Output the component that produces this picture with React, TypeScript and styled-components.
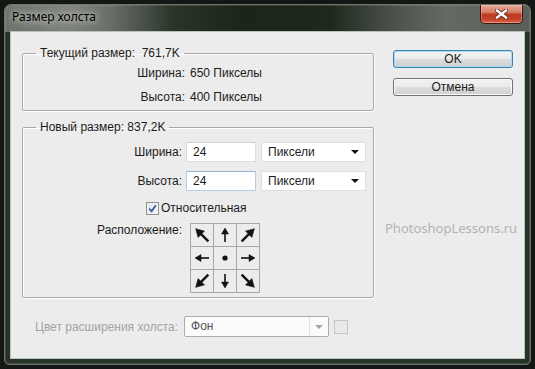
import styled, { createGlobalStyle } from "styled-components";

const GlobalStyle = createGlobalStyle`
  html, body {
    margin: 0;
    padding: 0;
    background: #151915;
  }
  body {
    width: 535px;
    height: 369px;
    overflow: hidden;
    font-family: "Liberation Sans", Arial, sans-serif;
    font-size: 12px;
    color: #1b1b1b;
  }
`;

const Desktop = styled.div`
  width: 535px;
  height: 369px;
  box-sizing: border-box;
  padding: 4px 4px 0 4px;
  background: #141814;
`;

const Window = styled.div`
  width: 527px;
  height: 361px;
  box-sizing: border-box;
  border: 1px solid #6d746c;
  border-radius: 7px 7px 5px 5px;
  padding: 0 5px 5px 5px;
  display: flex;
  flex-direction: column;
  background:
    linear-gradient(
        90deg,
        #6c716b 0%,
        #7e827d 12%,
        #6a6f69 20%,
        #2a3529 32%,
        #1b2619 45%,
        #1e291d 62%,
        #4c524b 74%,
        #656964 84%,
        #5b5f5a 100%
      )
      top / 100% 27px no-repeat,
    #283327;
  box-shadow: inset 0 0 0 1px rgba(255, 255, 255, 0.12);
`;

const TitleBar = styled.div`
  height: 26px;
  display: flex;
  justify-content: space-between;
  align-items: flex-start;
`;

const Title = styled.div`
  margin-left: 2px;
  line-height: 24px;
  font-family: "Noto Sans", "Open Sans", sans-serif;
  font-size: 12px;
  color: #000;
  text-shadow: 0 0 6px rgba(230, 232, 228, 0.9), 0 0 10px rgba(220, 222, 218, 0.7);
`;

const CloseButton = styled.div`
  width: 43px;
  height: 19px;
  margin-right: 2px;
  box-sizing: border-box;
  border: 1px solid #3a1912;
  border-top: none;
  border-radius: 0 0 5px 5px;
  display: flex;
  align-items: center;
  justify-content: center;
  background: linear-gradient(
    #e9ab9a 0%,
    #d67d66 40%,
    #c03a20 52%,
    #c4442a 80%,
    #dc6d4f 100%
  );
  box-shadow: inset 0 0 0 1px rgba(255, 220, 210, 0.35);
`;

const Client = styled.div`
  position: relative;
  flex: 1;
  box-sizing: border-box;
  border: 1px solid #b9c2b8;
  background: #ececec;
  padding: 0 11px 0 11px;
  display: grid;
  grid-template-columns: 352px 120px;
  column-gap: 19px;
  align-items: start;
`;

const LeftColumn = styled.div`
  display: flex;
  flex-direction: column;
  padding-top: 14px;
`;

const Group = styled.fieldset<{ $gap?: number }>`
  margin: 0;
  padding: 0;
  min-width: 0;
  border: 1px solid #a9a9a9;
  border-radius: 2px;
  box-shadow: inset 1px 1px 0 #fff, 1px 1px 0 #fff;
  & + & {
    margin-top: ${(p) => p.$gap ?? 9}px;
  }
`;

const Legend = styled.legend`
  margin-left: 13px;
  padding: 0 4px;
  line-height: 14px;
  font-size: 12px;
`;

const GroupBody = styled.div<{ $top: number; $bottom: number }>`
  display: flex;
  flex-direction: column;
  padding: ${(p) => p.$top}px 0 ${(p) => p.$bottom}px 0;
`;

const Row = styled.div<{ $label: number; $height?: number; $gap?: number }>`
  display: grid;
  grid-template-columns: ${(p) => p.$label}px auto auto;
  justify-content: start;
  align-items: center;
  column-gap: ${(p) => p.$gap ?? 4}px;
  height: ${(p) => p.$height ?? 24}px;
  & + & {
    margin-top: 0;
  }
`;

const InputRow = styled(Row)`
  & + & {
    margin-top: 9px;
  }
`;

const Label = styled.span`
  text-align: right;
  white-space: nowrap;
`;

const TextBox = styled.div<{ $focused?: boolean }>`
  width: 70px;
  height: 20px;
  box-sizing: border-box;
  background: #fff;
  border: 1px solid ${(p) => (p.$focused ? "#b6cde4" : "#dcdcdc")};
  border-top-color: ${(p) => (p.$focused ? "#8fb2d6" : "#d2d2d2")};
  padding-left: 6px;
  line-height: 18px;
`;

const Select = styled.div`
  width: 105px;
  height: 20px;
  margin-left: 1px;
  box-sizing: border-box;
  background: #fff;
  border: 1px solid #dedede;
  display: flex;
  align-items: center;
  justify-content: space-between;
  padding: 0 6px 0 6px;
`;

const Caret = styled.span<{ $color?: string }>`
  width: 0;
  height: 0;
  border-left: 4px solid transparent;
  border-right: 4px solid transparent;
  border-top: 4px solid ${(p) => p.$color ?? "#111"};
`;

const CheckRow = styled.label`
  display: flex;
  align-items: center;
  gap: 2px;
  height: 14px;
  margin-top: 10px;
  padding-left: 123px;
`;

const CheckBox = styled.span`
  width: 13px;
  height: 13px;
  box-sizing: border-box;
  border: 1px solid #8f8f8f;
  background: linear-gradient(135deg, #dfe3e9, #f6f7f9);
  box-shadow: inset 0 0 0 1px #f4f4f4;
  display: flex;
  align-items: center;
  justify-content: center;
`;

const AnchorRow = styled.div`
  display: grid;
  grid-template-columns: 159px 70px;
  column-gap: 8px;
  align-items: start;
  margin-top: 8px;
`;

const AnchorLabel = styled(Label)`
  margin-top: 0px;
  line-height: 14px;
`;

const AnchorGrid = styled.div`
  display: grid;
  grid-template-columns: repeat(3, 22px);
  grid-template-rows: repeat(3, 22px);
  gap: 1px;
  padding: 1px;
  width: 70px;
  box-sizing: border-box;
  background: #a8a8a8;
`;

const AnchorCell = styled.div`
  background: #ececec;
  display: flex;
  align-items: center;
  justify-content: center;
`;

const BottomRow = styled.div`
  display: flex;
  align-items: center;
  margin-top: 18px;
  padding-left: 13px;
  height: 21px;
  color: #a3a3a3;
`;

const DisabledSelect = styled.div`
  width: 145px;
  height: 21px;
  margin-left: 6px;
  box-sizing: border-box;
  border: 1px solid #acacac;
  border-radius: 2px;
  background: #fbfbfb;
  display: flex;
  color: #555;
`;

const DisabledValue = styled.span`
  flex: 1;
  padding-left: 6px;
  line-height: 19px;
  border-right: 1px solid #e2e2e2;
`;

const DisabledArrow = styled.span`
  width: 18px;
  display: flex;
  align-items: center;
  justify-content: center;
`;

const Swatch = styled.span`
  width: 14px;
  height: 14px;
  margin-left: 5px;
  box-sizing: border-box;
  border: 1px solid #c6c6c6;
  background: #e9e9e9;
`;

const ButtonColumn = styled.div`
  display: flex;
  flex-direction: column;
  gap: 10px;
  padding-top: 18px;
`;

const Button = styled.div<{ $default?: boolean }>`
  height: 18px;
  box-sizing: border-box;
  border: 1px solid ${(p) => (p.$default ? "#3b80ae" : "#707070")};
  border-radius: 3px;
  text-align: center;
  line-height: 16px;
  background: linear-gradient(#f2f2f2 0%, #ebebeb 48%, #dddddd 52%, #cfcfcf 100%);
  box-shadow: inset 0 0 0 1px ${(p) => (p.$default ? "#a6dcf5" : "#fbfbfb")};
`;

const Watermark = styled.div`
  position: absolute;
  left: 374px;
  top: 187px;
  font-family: "Noto Sans", "Open Sans", sans-serif;
  font-size: 13px;
  line-height: 18px;
  color: #b3b3b3;
  pointer-events: none;
`;

const anchors = [
  { rot: -45, diag: true },
  { rot: 0, diag: false },
  { rot: 45, diag: true },
  { rot: -90, diag: false },
  null,
  { rot: 90, diag: false },
  { rot: -135, diag: true },
  { rot: 180, diag: false },
  { rot: 135, diag: true },
];

function Arrow({ rot, diag }: { rot: number; diag: boolean }) {
  return (
    <svg width="22" height="22" viewBox="0 0 22 22">
      <g transform={`rotate(${rot} 11 11)`} fill="#111" stroke="#111">
        {diag ? (
          <>
            <line x1="11" y1="9" x2="11" y2="20" strokeWidth="2.4" />
            <polygon points="11,2 6.5,10 15.5,10" strokeWidth="0.5" />
          </>
        ) : (
          <>
            <line x1="11" y1="9" x2="11" y2="18" strokeWidth="1.6" />
            <polygon points="11,4 7.5,10 14.5,10" strokeWidth="0.5" />
          </>
        )}
      </g>
    </svg>
  );
}

export default function App() {
  return (
    <>
      <GlobalStyle />
      <Desktop>
        <Window>
          <TitleBar>
            <Title>Размер холста</Title>
            <CloseButton>
              <svg width="13" height="10" viewBox="0 0 13 10">
                <path d="M2 1.5 L11 8.5 M11 1.5 L2 8.5" stroke="#5a2216" strokeWidth="4" strokeLinecap="square" />
                <path d="M2 1.5 L11 8.5 M11 1.5 L2 8.5" stroke="#fff" strokeWidth="2.4" strokeLinecap="square" />
              </svg>
            </CloseButton>
          </TitleBar>
          <Client>
            <LeftColumn>
              <Group>
                <Legend>Текущий размер:&nbsp; 761,7K</Legend>
                <GroupBody $top={1} $bottom={1}>
                  <Row $label={162} $gap={5}>
                    <Label>Ширина:</Label>
                    <span>650 Пикселы</span>
                  </Row>
                  <Row $label={162} $gap={5}>
                    <Label>Высота:</Label>
                    <span>400 Пикселы</span>
                  </Row>
                </GroupBody>
              </Group>
              <Group $gap={9}>
                <Legend>Новый размер: 837,2K</Legend>
                <GroupBody $top={8} $bottom={4}>
                  <InputRow $label={159} $height={20}>
                    <Label>Ширина:</Label>
                    <TextBox>24</TextBox>
                    <Select>
                      Пиксели
                      <Caret />
                    </Select>
                  </InputRow>
                  <InputRow $label={159} $height={20}>
                    <Label>Высота:</Label>
                    <TextBox $focused>24</TextBox>
                    <Select>
                      Пиксели
                      <Caret />
                    </Select>
                  </InputRow>
                  <CheckRow>
                    <CheckBox>
                      <svg width="9" height="9" viewBox="0 0 9 9">
                        <path d="M1.2 4.6 L3.6 7.2 L7.8 1.2" fill="none" stroke="#3d5a98" strokeWidth="1.8" />
                      </svg>
                    </CheckBox>
                    <span>Относительная</span>
                  </CheckRow>
                  <AnchorRow>
                    <AnchorLabel>Расположение:</AnchorLabel>
                    <AnchorGrid>
                      {anchors.map((a, i) => (
                        <AnchorCell key={i}>
                          {a ? (
                            <Arrow rot={a.rot} diag={a.diag} />
                          ) : (
                            <svg width="22" height="22" viewBox="0 0 22 22">
                              <circle cx="11" cy="11" r="2.6" fill="#111" />
                            </svg>
                          )}
                        </AnchorCell>
                      ))}
                    </AnchorGrid>
                  </AnchorRow>
                </GroupBody>
              </Group>
              <BottomRow>
                <span>Цвет расширения холста:</span>
                <DisabledSelect>
                  <DisabledValue>Фон</DisabledValue>
                  <DisabledArrow>
                    <Caret $color="#a6a6a6" />
                  </DisabledArrow>
                </DisabledSelect>
                <Swatch />
              </BottomRow>
            </LeftColumn>
            <ButtonColumn>
              <Button $default>OK</Button>
              <Button>Отмена</Button>
            </ButtonColumn>
            <Watermark>PhotoshopLessons.ru</Watermark>
          </Client>
        </Window>
      </Desktop>
    </>
  );
}
